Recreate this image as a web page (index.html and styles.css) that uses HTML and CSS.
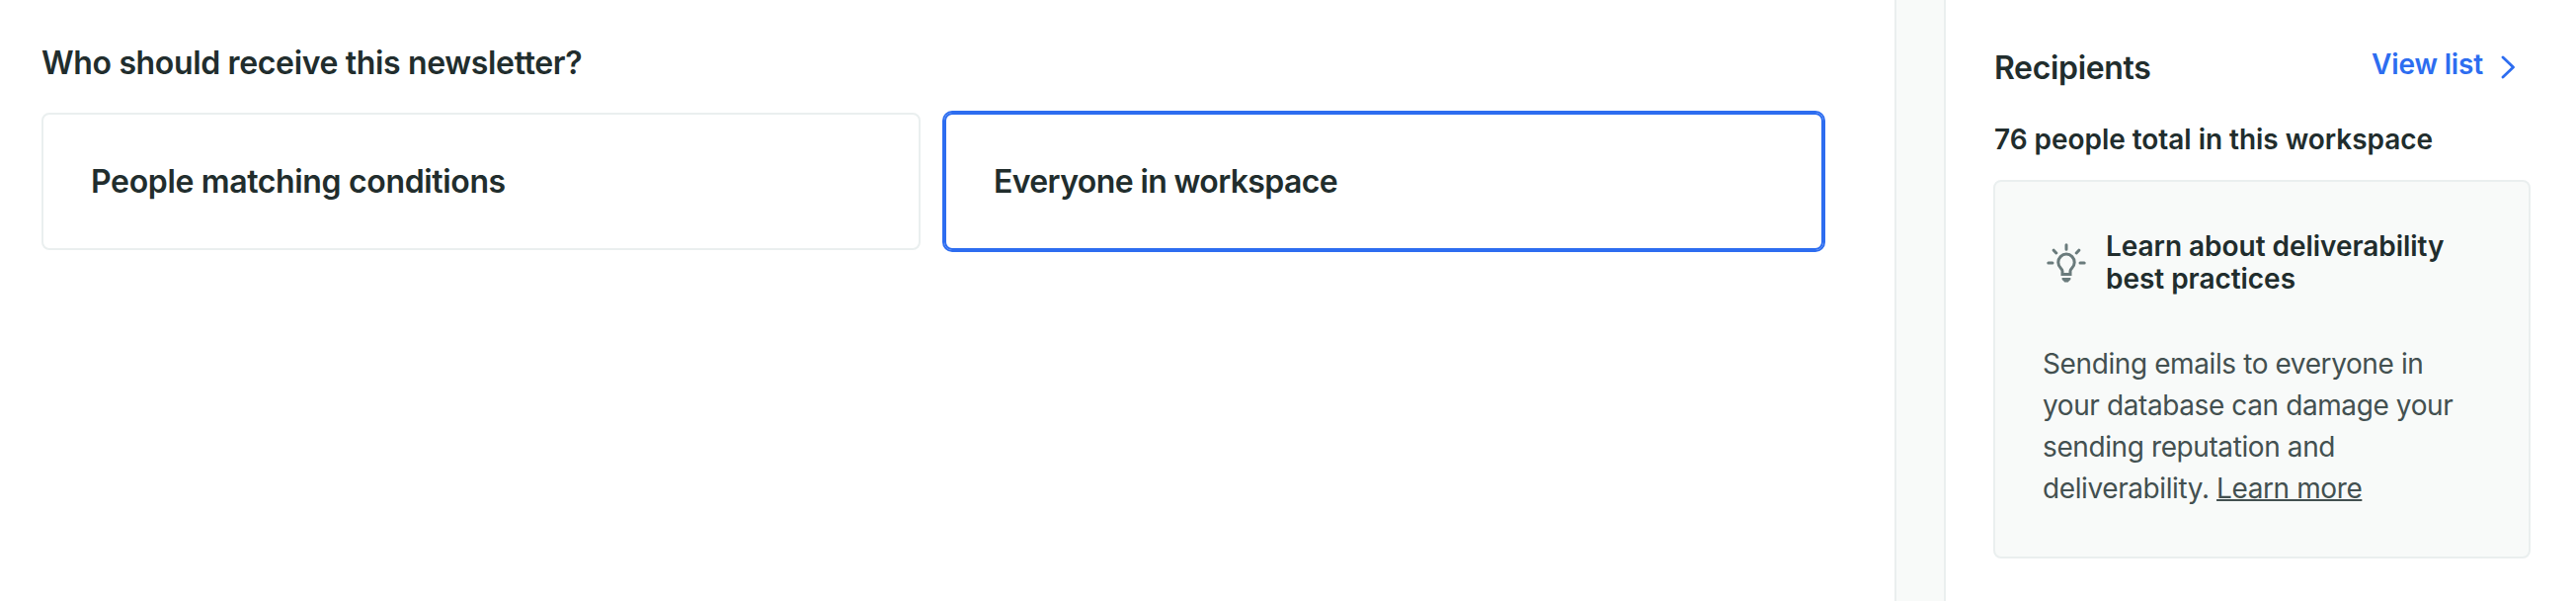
FILE: index.html
```html
<!DOCTYPE html>
<html lang="en">
<head>
  <meta charset="UTF-8">
  <meta name="viewport" content="width=device-width, initial-scale=1.0">
  <title>Newsletter Recipients</title>
  <link rel="stylesheet" href="styles.css">
</head>
<body>
  <div class="page">
    <main class="main">
      <h1>Who should receive this newsletter?</h1>
      <div class="options">
        <div class="option">People matching conditions</div>
        <div class="option selected"><span class="tight">Everyone in workspace</span></div>
      </div>
    </main>

    <div class="gutter"></div>

    <aside class="sidebar">
      <div class="sidebar-header">
        <h2>Recipients</h2>
        <a class="view-list">View list
          <svg width="48" height="34" viewBox="0 0 48 34" fill="none" stroke="currentColor" stroke-width="2.8" stroke-linecap="round" stroke-linejoin="round">
            <path d="M20 10l10.5 10L20 30"/>
          </svg>
        </a>
      </div>
      <p class="total">76 people total in this workspace</p>

      <div class="callout">
        <div class="callout-title">
          <svg width="48" height="48" viewBox="0 0 48 48" fill="none" stroke="currentColor" stroke-width="3" stroke-linecap="round">
            <path d="M24 5.8v4.4M5.8 24h4.2M38 24h4.2M11.2 11.2l2.6 2.8M36.8 11.2l-2.6 2.8"/>
            <path d="M20 35.6v-3.4c0-1.2-.6-2-1.6-2.9A8.2 8.2 0 1 1 29.6 29.3c-1 .9-1.6 1.7-1.6 2.9v3.4z" stroke-linecap="butt"/>
            <path d="M20.6 39h6.8c.8 0 1.3.5 1.1 1.2-.3 1-.9 1.6-1.7 1.9-.3 1-1 1.5-2 1.5h-1.6c-1 0-1.7-.5-2-1.5-.8-.3-1.4-.9-1.7-1.9-.2-.7.3-1.2 1.1-1.2z" fill="currentColor" stroke="none"/>
          </svg>
          <h3>Learn about deliverability<br>best practices</h3>
        </div>
        <p>Sending emails to everyone in your database can damage your sending reputation and deliverability. <a>Learn more</a></p>
      </div>
    </aside>
  </div>
</body>
</html>
```
FILE: styles.css
```css
* {
  box-sizing: border-box;
}
body {
  margin: 0;
  font-family: Inter, sans-serif;
  background-color: #fff;
  color: #212d2d;
}
h1, h2, h3, p {
  margin: 0;
}
h1, h2 {
  font-size: 32px;
  font-weight: 600;
  line-height: 40px;
  letter-spacing: -0.35px;
}
.page {
  display: flex;
  height: 608px;
}
.main {
  width: 1918px;
  padding: 44px 72px 0 42px;
}
.options {
  display: grid;
  grid-template-columns: 1fr 1fr;
  gap: 24px;
  margin-top: 30px;
}
.option {
  display: flex;
  align-items: center;
  height: 139px;
  padding: 0 48px;
  border: 2px solid #eaefef;
  border-radius: 8px;
  font-size: 32px;
  font-weight: 600;
  letter-spacing: -0.35px;
}
.option.selected {
  border-color: #2d6df0;
  box-shadow: 0 0 0 2px #2d6df0;
}
.tight {
  letter-spacing: -0.62px;
}
.gutter {
  width: 52px;
  background-color: #f8faf9;
  border-left: 2px solid #eaefef;
  border-right: 2px solid #eaefef;
}
.sidebar {
  flex: 1;
  padding: 48px 46px 0 48px;
}
.sidebar-header {
  display: flex;
  justify-content: space-between;
  align-items: flex-start;
  height: 40px;
}
.sidebar-header h2 {
  padding: 1px 0 0 1px;
}
.view-list {
  display: flex;
  color: #2d6df0;
  font-size: 28px;
  font-weight: 600;
  line-height: 34px;
  letter-spacing: -0.15px;
}
.total {
  margin: 36px 0 24px 1px;
  font-size: 28px;
  font-weight: 600;
  line-height: 34px;
  letter-spacing: -0.04px;
}
.callout {
  padding: 48px;
  border: 2px solid #eaefef;
  border-radius: 8px;
  background-color: #f8faf9;
}
.callout-title {
  display: flex;
  align-items: center;
  gap: 16px;
  color: #6a7b7c;
}
.callout-title h3 {
  padding-top: 1px;
  color: #212d2d;
  font-size: 28px;
  font-weight: 600;
  line-height: 33px;
  letter-spacing: -0.04px;
  white-space: nowrap;
}
.callout p {
  margin-top: 48px;
  color: #435050;
  font-size: 28px;
  line-height: 42px;
  letter-spacing: -0.4px;
}
.callout a {
  text-decoration: underline;
  text-decoration-thickness: 2px;
  text-decoration-skip-ink: none;
}
```
